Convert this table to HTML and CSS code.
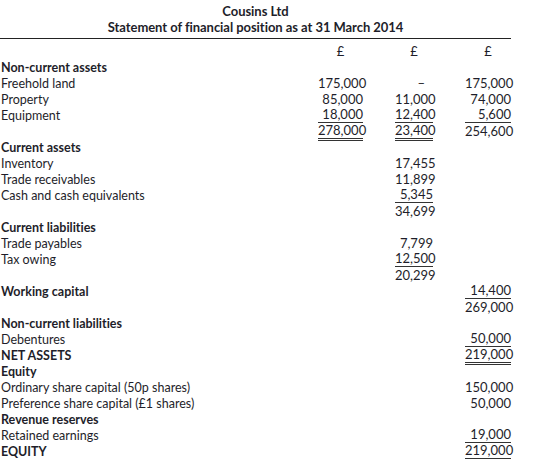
FILE: index.html
```html
<!DOCTYPE html>
<html>
<head>
<meta charset="utf-8">
<link rel="stylesheet" href="styles.css">
</head>
<body>
<div class="sheet">
  <div class="title">Cousins Ltd</div>
  <div class="title">Statement of financial position as at 31 March 2014</div>
  <div class="rule"></div>
  <div class="row"><span class="label"></span><span class="n c">£</span><span class="n c">£</span><span class="n c">£</span></div>
  <div class="row"><span class="label b">Non-current assets</span><span class="n"></span><span class="n"></span><span class="n"></span></div>
  <div class="row"><span class="label">Freehold land</span><span class="n">175,000</span><span class="n dash">–</span><span class="n">175,000</span></div>
  <div class="row"><span class="label">Property</span><span class="n">85,000</span><span class="n">11,000</span><span class="n">74,000</span></div>
  <div class="row"><span class="label">Equipment</span><span class="n"><span class="u">18,000</span></span><span class="n"><span class="u">12,400</span></span><span class="n"><span class="u">5,600</span></span></div>
  <div class="row"><span class="label"></span><span class="n"><span class="dd">278,000</span></span><span class="n"><span class="dd">23,400</span></span><span class="n">254,600</span></div>
  <div class="row"><span class="label b">Current assets</span><span class="n"></span><span class="n"></span><span class="n"></span></div>
  <div class="row"><span class="label">Inventory</span><span class="n"></span><span class="n">17,455</span><span class="n"></span></div>
  <div class="row"><span class="label">Trade receivables</span><span class="n"></span><span class="n">11,899</span><span class="n"></span></div>
  <div class="row"><span class="label">Cash and cash equivalents</span><span class="n"></span><span class="n"><span class="u">5,345</span></span><span class="n"></span></div>
  <div class="row"><span class="label"></span><span class="n"></span><span class="n">34,699</span><span class="n"></span></div>
  <div class="row"><span class="label b">Current liabilities</span><span class="n"></span><span class="n"></span><span class="n"></span></div>
  <div class="row"><span class="label">Trade payables</span><span class="n"></span><span class="n">7,799</span><span class="n"></span></div>
  <div class="row"><span class="label">Tax owing</span><span class="n"></span><span class="n"><span class="u">12,500</span></span><span class="n"></span></div>
  <div class="row"><span class="label"></span><span class="n"></span><span class="n">20,299</span><span class="n"></span></div>
  <div class="row"><span class="label b">Working capital</span><span class="n"></span><span class="n"></span><span class="n"><span class="u">14,400</span></span></div>
  <div class="row"><span class="label"></span><span class="n"></span><span class="n"></span><span class="n">269,000</span></div>
  <div class="row"><span class="label b">Non-current liabilities</span><span class="n"></span><span class="n"></span><span class="n"></span></div>
  <div class="row"><span class="label">Debentures</span><span class="n"></span><span class="n"></span><span class="n"><span class="u">50,000</span></span></div>
  <div class="row"><span class="label b">NET ASSETS</span><span class="n"></span><span class="n"></span><span class="n"><span class="dd">219,000</span></span></div>
  <div class="row"><span class="label b">Equity</span><span class="n"></span><span class="n"></span><span class="n"></span></div>
  <div class="row"><span class="label">Ordinary share capital (50p shares)</span><span class="n"></span><span class="n"></span><span class="n">150,000</span></div>
  <div class="row"><span class="label">Preference share capital (£1 shares)</span><span class="n"></span><span class="n"></span><span class="n">50,000</span></div>
  <div class="row"><span class="label b">Revenue reserves</span><span class="n"></span><span class="n"></span><span class="n"></span></div>
  <div class="row"><span class="label">Retained earnings</span><span class="n"></span><span class="n"></span><span class="n"><span class="u">19,000</span></span></div>
  <div class="row"><span class="label b">EQUITY</span><span class="n"></span><span class="n"></span><span class="n"><span class="dd">219,000</span></span></div>
</div>
</body>
</html>
```

FILE: styles.css
```css
html, body {
  margin: 0;
  padding: 0;
  background: #ffffff;
}
body {
  font-family: Lato, "Open Sans", sans-serif;
  font-size: 13px;
  color: #1e1e2a;
  font-variant-ligatures: none;
}
.sheet {
  width: 511px;
  padding-top: 3px;
}
.title {
  height: 16px;
  line-height: 16px;
  text-align: center;
  font-weight: bold;
  letter-spacing: -0.05px;
}
.rule {
  box-sizing: border-box;
  border-top: 1px solid #222;
  margin-top: 3px;
  height: 5px;
}
.row {
  display: grid;
  grid-template-columns: 1fr 45px 38px 46px;
  column-gap: 32px;
  height: 16px;
  line-height: 16px;
}
.label {
  padding-left: 1px;
  padding-top: 1px;
  white-space: nowrap;
  font-size: 12.5px;
}
.b {
  font-weight: bold;
}
.n {
  text-align: right;
  white-space: nowrap;
}
.n.c {
  text-align: center;
}
.n.dash {
  padding-right: 8px;
}
.u {
  display: block;
  line-height: 15px;
  border-bottom: 1px solid #333;
}
.dd {
  display: block;
  line-height: 15px;
  border-bottom: 3px double #333;
}
```
